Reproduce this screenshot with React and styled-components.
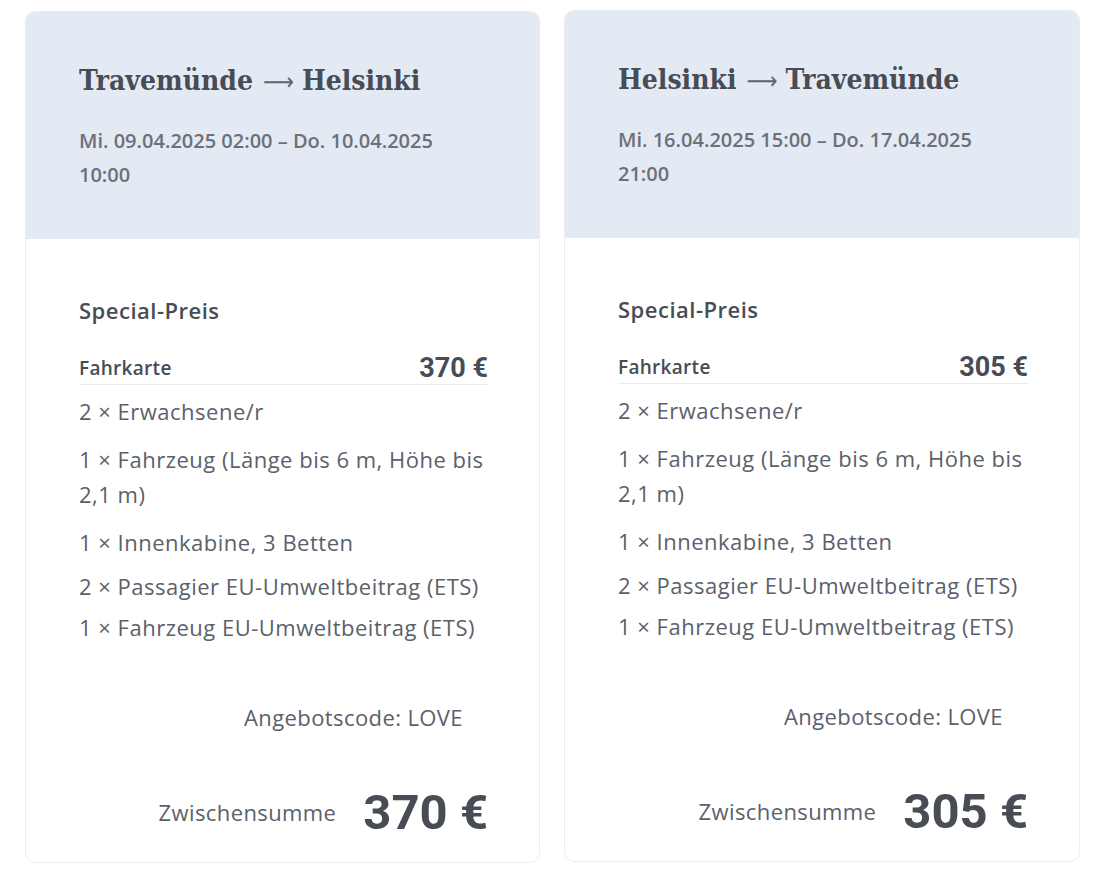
import React from 'react';
import styled, { createGlobalStyle } from 'styled-components';

const GlobalStyle = createGlobalStyle`
  html, body {
    margin: 0;
    padding: 0;
    background: #ffffff;
  }
  body {
    font-family: "Open Sans", Lato, sans-serif;
  }
`;

const Page = styled.div`
  display: grid;
  grid-template-columns: 515px 516px;
  column-gap: 24px;
  padding: 11px 0 0 25px;
  align-items: start;
`;

const Card = styled.div`
  display: flex;
  flex-direction: column;
  border: 1px solid #e9ecf0;
  border-radius: 10px;
  overflow: hidden;
  background: #ffffff;
  margin-top: ${(p) => (p.$raised ? '-1px' : '0')};
`;

const Header = styled.div`
  background: #e4eaf4;
  padding: 52px 80px 47px 53px;
  height: 227px;
  box-sizing: border-box;
`;

const Route = styled.h2`
  margin: 0;
  font-family: "DejaVu Serif Condensed", "DejaVu Serif", serif;
  font-stretch: condensed;
  font-weight: 700;
  font-size: 28px;
  line-height: 34px;
  color: #474c55;
  white-space: nowrap;
`;

const Arrow = styled.span`
  font-family: "DejaVu Sans", sans-serif;
  font-weight: 400;
  font-size: 24px;
  margin: 0 8px 0 10px;
  color: #60656e;
`;

const Dates = styled.div`
  margin-top: 25px;
  font-size: 20px;
  font-weight: 600;
  letter-spacing: 0;
  line-height: 34px;
  color: #6c7079;
`;

const Body = styled.div`
  display: flex;
  flex-direction: column;
  padding: 56px 51px 22px 53px;
`;

const SectionTitle = styled.div`
  font-size: 22px;
  font-weight: 600;
  letter-spacing: 0.5px;
  line-height: 30px;
  color: #474c55;
`;

const TicketRow = styled.div`
  margin-top: 27px;
  display: flex;
  justify-content: space-between;
  align-items: center;
  height: 32px;
  border-bottom: 1px solid #e8ebef;
`;

const TicketLabel = styled.span`
  font-size: 19px;
  font-weight: 600;
  letter-spacing: 0.3px;
  color: #474c55;
`;

const TicketPrice = styled.span`
  font-family: Roboto, "Liberation Sans", sans-serif;
  font-size: 27px;
  font-weight: 700;
  color: #474c55;
`;

const ItemList = styled.ul`
  list-style: none;
  margin: 0;
  padding: 0;
`;

const Item = styled.li`
  margin-top: ${(p) => p.$gap}px;
  font-size: 22px;
  letter-spacing: 0.5px;
  line-height: 35px;
  color: #5b616b;
`;

const Code = styled.div`
  margin-top: 57px;
  padding-right: 25px;
  text-align: right;
  font-size: 22px;
  letter-spacing: 0.4px;
  line-height: 30px;
  color: #5b616b;
`;

const TotalRow = styled.div`
  margin-top: 52px;
  display: flex;
  justify-content: flex-end;
  align-items: center;
  gap: 27px;
  height: 56px;
`;

const TotalLabel = styled.span`
  font-size: 22px;
  letter-spacing: 0.4px;
  color: #5b616b;
`;

const TotalPrice = styled.span`
  font-family: Roboto, "Liberation Sans", sans-serif;
  font-size: 49px;
  font-weight: 700;
  color: #474c55;
`;

const items = [
  { text: '2 × Erwachsene/r', gap: 9 },
  { text: '1 × Fahrzeug (Länge bis 6 m, Höhe bis 2,1 m)', gap: 13 },
  { text: '1 × Innenkabine, 3 Betten', gap: 13 },
  { text: '2 × Passagier EU-Umweltbeitrag (ETS)', gap: 9 },
  { text: '1 × Fahrzeug EU-Umweltbeitrag (ETS)', gap: 6 },
];

const trips = [
  {
    from: 'Travemünde',
    to: 'Helsinki',
    dates: 'Mi. 09.04.2025 02:00 – Do. 10.04.2025 10:00',
    price: '370 €',
  },
  {
    from: 'Helsinki',
    to: 'Travemünde',
    dates: 'Mi. 16.04.2025 15:00 – Do. 17.04.2025 21:00',
    price: '305 €',
    raised: true,
  },
];

function TripCard({ trip }) {
  return (
    <Card $raised={trip.raised}>
      <Header>
        <Route>
          {trip.from}
          <Arrow>⟶</Arrow>
          {trip.to}
        </Route>
        <Dates>{trip.dates}</Dates>
      </Header>
      <Body>
        <SectionTitle>Special-Preis</SectionTitle>
        <TicketRow>
          <TicketLabel>Fahrkarte</TicketLabel>
          <TicketPrice>{trip.price}</TicketPrice>
        </TicketRow>
        <ItemList>
          {items.map((it) => (
            <Item key={it.text} $gap={it.gap}>
              {it.text}
            </Item>
          ))}
        </ItemList>
        <Code>Angebotscode: LOVE</Code>
        <TotalRow>
          <TotalLabel>Zwischensumme</TotalLabel>
          <TotalPrice>{trip.price}</TotalPrice>
        </TotalRow>
      </Body>
    </Card>
  );
}

export default function App() {
  return (
    <>
      <GlobalStyle />
      <Page>
        {trips.map((t) => (
          <TripCard trip={t} key={t.from} />
        ))}
      </Page>
    </>
  );
}
